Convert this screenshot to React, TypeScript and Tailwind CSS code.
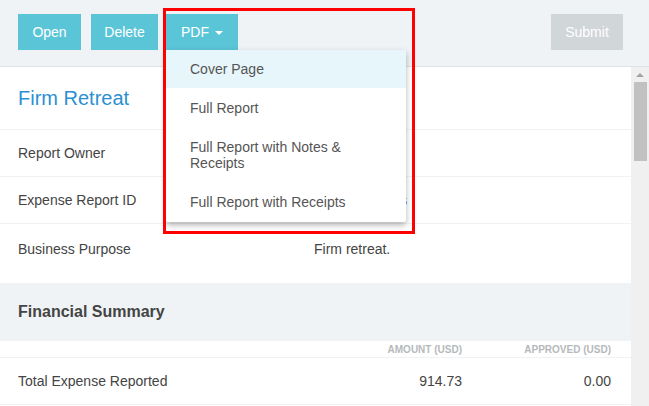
import React from 'react';

const detailRows = [
  { label: 'Report Owner', value: '' },
  { label: 'Expense Report ID', value: 'Team Retreats' },
  { label: 'Business Purpose', value: 'Firm retreat.' },
];

const pdfOptions = ['Cover Page', 'Full Report', 'Full Report with Notes & Receipts', 'Full Report with Receipts'];

const App: React.FC = () => {
  return (
    <div className="relative w-[649px] h-[406px] overflow-hidden bg-white text-[#444] font-['Liberation_Sans',Arial,sans-serif]">
      <header className="h-[67px] bg-[#eff3f6] border-b border-[#dde2e5] flex items-start pt-[14px] pl-[18px] pr-[26px]">
        <div className="flex gap-[10px]">
          <button className="h-[36px] w-[63px] bg-[#5bc5d8] text-white text-[14px]">Open</button>
          <button className="h-[36px] w-[67px] bg-[#5bc5d8] text-white text-[14px]">Delete</button>
          <div className="relative ml-[-2px]">
            <button className="h-[36px] w-[72px] bg-[#5bc5d8] text-white text-[14px] flex items-center justify-center gap-[6px]">
              PDF
              <span className="w-0 h-0 border-l-[4px] border-r-[4px] border-t-[4px] border-l-transparent border-r-transparent border-t-white mt-[2px]" />
            </button>
            <ul className="absolute left-0 top-[36px] w-[240px] bg-white shadow-[0_3px_6px_rgba(0,0,0,0.3)] rounded-b-[2px] z-20 text-[14px] text-[#555]">
              {pdfOptions.map((opt, i) => (
                <li
                  key={opt}
                  className={`px-[24px] leading-[16px] ${i === 0 ? 'bg-[#e7f6fa] py-[11px]' : ''} ${i === 1 ? 'pt-[12px] pb-[11px]' : ''} ${i === 2 ? 'py-[12px]' : ''} ${i === 3 ? 'pt-[11px] pb-[12px]' : ''}`}
                >
                  {opt}
                </li>
              ))}
            </ul>
          </div>
        </div>
        <button className="ml-auto h-[36px] w-[72px] bg-[#d1d6d9] text-white text-[14px]">Submit</button>
      </header>

      <div className="flex">
        <main className="w-[631px]">
          <div className="h-[63px] flex items-center px-[18px] border-b border-[#f0f3f5]">
            <h1 className="text-[20px] text-[#2b8fd2]">Firm Retreat</h1>
          </div>
          {detailRows.map((row, i) => (
            <div
              key={row.label}
              className={`flex px-[18px] text-[14px] ${i === 2 ? 'h-[59px] pt-[15px]' : 'h-[47px] items-center border-b border-[#f0f3f5]'}`}
            >
              <span className="w-[296px]">{row.label}</span>
              {row.value && <span className={`text-[#444] ${i === 1 ? 'ml-[2px]' : ''}`}>{row.value}</span>}
            </div>
          ))}
          <div className="h-[58px] bg-[#eff3f6] flex items-center px-[18px]">
            <h2 className="text-[16px] font-bold text-[#444]">Financial Summary</h2>
          </div>
          <div className="h-[17px] flex items-center justify-end pr-[20px] border-b border-[#f0f3f5] text-[10px] font-bold text-[#b5b9bc]">
            <span className="w-[150px] text-right">AMOUNT (USD)</span>
            <span className="w-[149px] text-right">APPROVED (USD)</span>
          </div>
          <div className="h-[47px] flex items-center px-[18px] pr-[20px] border-b border-[#f0f3f5] text-[14px]">
            <span className="flex-1">Total Expense Reported</span>
            <span className="w-[150px] text-right">914.73</span>
            <span className="w-[149px] text-right">0.00</span>
          </div>
        </main>
        <aside className="w-[18px] h-[339px] bg-[#f0f0f0] flex flex-col items-center">
          <span className="mt-[6px] w-0 h-0 border-l-[4px] border-r-[4px] border-b-[4px] border-l-transparent border-r-transparent border-b-[#a3a3a3]" />
          <div className="mt-[5px] w-[13px] h-[79px] bg-[#c1c1c1]" />
        </aside>
      </div>

      <div className="absolute left-[163px] top-[8px] w-[252px] h-[226px] border-[3px] border-[#ff0000] z-30 pointer-events-none" />
    </div>
  );
};

export default App;
